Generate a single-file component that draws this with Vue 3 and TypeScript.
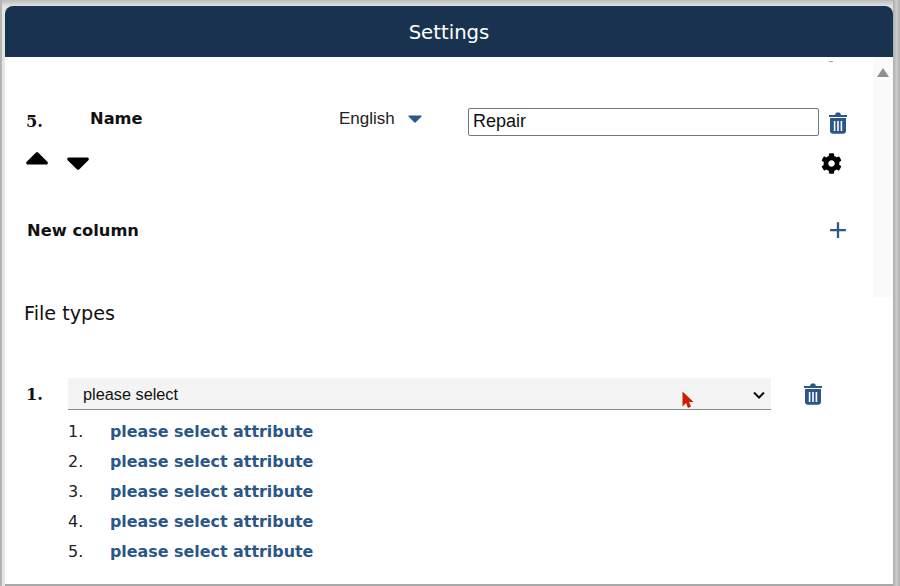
<script setup lang="ts">
const attributes = [1, 2, 3, 4, 5];
</script>

<template>
  <div class="frame">
    <div class="dialog">
      <header class="dialog-head">Settings</header>
      <div class="scroll-area">
        <div class="scroll-content">
          <span class="clipped-gear"></span>
          <div class="name-row">
            <span class="index index-five">5.</span>
            <span class="name-label">Name</span>
            <span class="language">English</span>
            <svg class="lang-caret" viewBox="0 0 14 8"><path d="M1 0.5h12c.6 0 .9.7.5 1.1L7.5 7.4c-.3.3-.7.3-1 0L.5 1.6C.1 1.2.4.5 1 .5z" /></svg>
            <input class="name-input" value="Repair" />
            <svg class="trash trash-top" viewBox="0 0 18 22"><use href="#trash-icon" /></svg>
          </div>
          <div class="move-row">
            <svg class="arrow" viewBox="0 0 22 13"><path d="M10 .6c.6-.6 1.5-.6 2.100 0l9.300 9.200c1 1 .3 2.700-1 2.700H1.700c-1.400 0-2-1.700-1-2.700z" /></svg>
            <svg class="arrow arrow-down" viewBox="0 0 22 13"><path d="M10 12.400c.6.6 1.500.6 2.100 0l9.300-9.200c1-1 .3-2.700-1-2.700H1.700C.3.500-.3 2.200.7 3.200z" /></svg>
            <svg class="gear" viewBox="0 0 512 512"><path d="M487.400 315.700l-42.600-24.600c4.300-23.200 4.300-47 0-70.200l42.600-24.600c4.900-2.800 7.100-8.600 5.500-14-11.100-35.600-30-67.800-54.700-94.600-3.800-4.100-10-5.100-14.800-2.300L380.800 110c-17.900-15.400-38.500-27.300-60.800-35.100V25.800c0-5.600-3.900-10.500-9.400-11.700-36.700-8.200-74.300-7.800-109.200 0-5.500 1.200-9.400 6.100-9.400 11.700V75c-22.200 7.900-42.800 19.800-60.800 35.100L88.700 85.500c-4.900-2.800-11-1.900-14.800 2.300-24.700 26.700-43.600 58.900-54.700 94.600-1.700 5.400.6 11.200 5.500 14L67.300 221c-4.300 23.200-4.300 47 0 70.200l-42.600 24.600c-4.900 2.800-7.100 8.600-5.500 14 11.100 35.600 30 67.800 54.700 94.600 3.800 4.100 10 5.100 14.800 2.300l42.600-24.600c17.900 15.400 38.500 27.300 60.800 35.100v49.200c0 5.600 3.900 10.500 9.400 11.700 36.700 8.200 74.300 7.800 109.200 0 5.500-1.200 9.400-6.100 9.400-11.700v-49.200c22.200-7.900 42.800-19.800 60.800-35.100l42.600 24.600c4.900 2.800 11 1.900 14.800-2.300 24.700-26.700 43.600-58.900 54.700-94.600 1.500-5.500-.7-11.300-5.600-14.100zM256 336c-44.100 0-80-35.900-80-80s35.900-80 80-80 80 35.900 80 80-35.900 80-80 80z" /></svg>
          </div>
          <div class="new-column">
            <span class="new-label">New column</span>
            <svg class="plus" viewBox="0 0 16 16"><path d="M8 1v14M1 8h14" /></svg>
          </div>
        </div>
        <div class="scrollbar">
          <span class="scroll-up"></span>
        </div>
      </div>

      <div class="file-types">
        <h2 class="section-title">File types</h2>
        <div class="type-row">
          <span class="index">1.</span>
          <div class="select-box">
            <span>please select</span>
            <svg class="chevron" viewBox="0 0 12 8"><path d="M1 1.500l5 5 5-5" /></svg>
            <svg class="cursor" viewBox="0 0 12 18"><path d="M0.500 0.500v15l3.500-3.500 2 5 3-1.500-2-4.500h4.500z" /></svg>
          </div>
          <svg class="trash trash-type" viewBox="0 0 18 22"><use href="#trash-icon" /></svg>
        </div>
        <ol class="attr-list">
          <li v-for="n in attributes" :key="n" class="attr-item">
            <span class="attr-num">{{ n }}.</span>
            <span class="attr-link">please select attribute</span>
          </li>
        </ol>
      </div>
    </div>

    <svg width="0" height="0" class="defs">
      <symbol id="trash-icon" viewBox="0 0 18 22">
        <path d="M0 3h6l.7-1.700c.2-.5.6-.8 1.100-.8h2.400c.5 0 .9.300 1.100.8L12 3h6v2H0z" />
        <path fill-rule="evenodd" d="M1 6h16v13c0 1.600-1.200 2.800-2.800 2.800H3.800C2.200 21.800 1 20.600 1 19zM4.800 9v10h1.600V9zM8.200 9v10h1.600V9zM11.600 9v10h1.600V9z" />
      </symbol>
    </svg>
  </div>
</template>

<style scoped>
.frame {
  box-sizing: border-box;
  width: 900px;
  height: 586px;
  padding: 6px 7px 2px 5px;
  background:
    linear-gradient(90deg, #adadad, #cbcbcb 50%, #b0b0b0) right top / 7px 100% no-repeat,
    linear-gradient(#b4b4b4, #b4b4b4) left top / 2px 100% no-repeat,
    linear-gradient(#bcbcbc, #e0e0e0) left top / 100% 6px no-repeat,
    #e4e4e4;
  overflow: hidden;
}

.dialog {
  height: 100%;
  background: #fff;
  border-radius: 8px 8px 0 0;
  box-shadow: 0 2px 0 #a9a9a9;
  overflow: hidden;
}

.dialog-head {
  height: 51px;
  text-align: center;
  background: #19324f;
  color: #fff;
  font: 19.7px/53px "DejaVu Sans", sans-serif;
}

.scroll-area {
  display: flex;
  height: 240px;
}

.scroll-content {
  position: relative;
  width: 868px;
  padding: 52px 0 0 21px;
  box-sizing: border-box;
}

/* top of the previous row's gear, cut off by the scroll edge */
.clipped-gear {
  position: absolute;
  left: 824px;
  top: 4px;
  width: 4px;
  height: 1px;
  background: #a0a0a0;
}

.scrollbar {
  width: 20px;
  background: #fafafa;
  padding-top: 11px;
  display: flex;
  justify-content: center;
  align-items: flex-start;
}

.scroll-up {
  width: 0;
  height: 0;
  border-left: 6px solid transparent;
  border-right: 6px solid transparent;
  border-bottom: 9px solid #8f8f8f;
}

.name-row {
  display: flex;
  align-items: flex-start;
  height: 43px;
}

.index {
  font: bold 16.3px "DejaVu Serif", serif;
  color: #111;
}

.index-five {
  width: 64px;
  margin-top: 3px;
}

.name-label {
  width: 249px;
  font: bold 16.3px "DejaVu Sans", sans-serif;
  color: #111;
}

.language {
  width: 69px;
  font: 17px "Liberation Sans", sans-serif;
  color: #222;
}

.lang-caret {
  width: 14px;
  height: 8px;
  margin-top: 6px;
  fill: #2a5688;
}

.name-input {
  box-sizing: border-box;
  width: 351px;
  height: 28px;
  margin: -1px 0 0 46px;
  padding: 0 4px 2px;
  border: 1px solid #767676;
  border-radius: 2px;
  font: 18px "Liberation Sans", sans-serif;
  color: #111;
  background: #fff;
}

.trash {
  fill: #2a5688;
}

.trash-top {
  width: 18px;
  height: 22px;
  margin: 3px 0 0 10px;
}

.move-row {
  display: flex;
  align-items: flex-start;
}

.arrow {
  width: 22px;
  height: 13px;
  fill: #000;
}

.arrow-down {
  margin: 5px 0 0 19px;
}

.gear {
  width: 21px;
  height: 21px;
  margin: 1px 0 0 732px;
  fill: #000;
}

.new-column {
  display: flex;
  align-items: center;
  justify-content: space-between;
  width: 821px;
  margin-top: 47px;
}

.new-label {
  margin-left: 1px;
  font: bold 16.3px "DejaVu Sans", sans-serif;
  color: #111;
}

.plus {
  width: 18px;
  height: 18px;
  margin-top: -2px;
  fill: none;
  stroke: #2a5688;
  stroke-width: 2;
}

.file-types {
  padding: 0 0 0 19px;
}

.section-title {
  margin: 5px 0 0;
  font: 400 19.2px "DejaVu Sans", sans-serif;
  color: #111;
}

.type-row {
  display: flex;
  align-items: flex-start;
  margin: 53px 0 0 2px;
}

.type-row .index {
  width: 42px;
  margin-top: 7px;
}

.select-box {
  position: relative;
  box-sizing: border-box;
  display: flex;
  align-items: center;
  justify-content: space-between;
  width: 703px;
  height: 32px;
  padding: 2px 6px 0 15px;
  background: #f4f4f4;
  border-bottom: 1px solid #8c8c8c;
  font: 16.3px "Liberation Sans", sans-serif;
  color: #111;
}

.chevron {
  width: 12px;
  height: 8px;
  fill: none;
  stroke: #111;
  stroke-width: 2;
}

.cursor {
  position: absolute;
  left: 614px;
  top: 13px;
  width: 12px;
  height: 18px;
  fill: #d01c00;
}

.trash-type {
  width: 18px;
  height: 22px;
  margin: 5px 0 0 33px;
}

.attr-list {
  list-style: none;
  margin: 7px 0 0 44px;
  padding: 0;
}

.attr-item {
  display: flex;
  height: 30px;
  line-height: 30px;
}

.attr-num {
  width: 42px;
  font: 16px/30px "DejaVu Sans", sans-serif;
  color: #222;
}

.attr-link {
  font: bold 15.9px/30px "DejaVu Sans", sans-serif;
  color: #2a5688;
}

.defs {
  position: absolute;
}
</style>
